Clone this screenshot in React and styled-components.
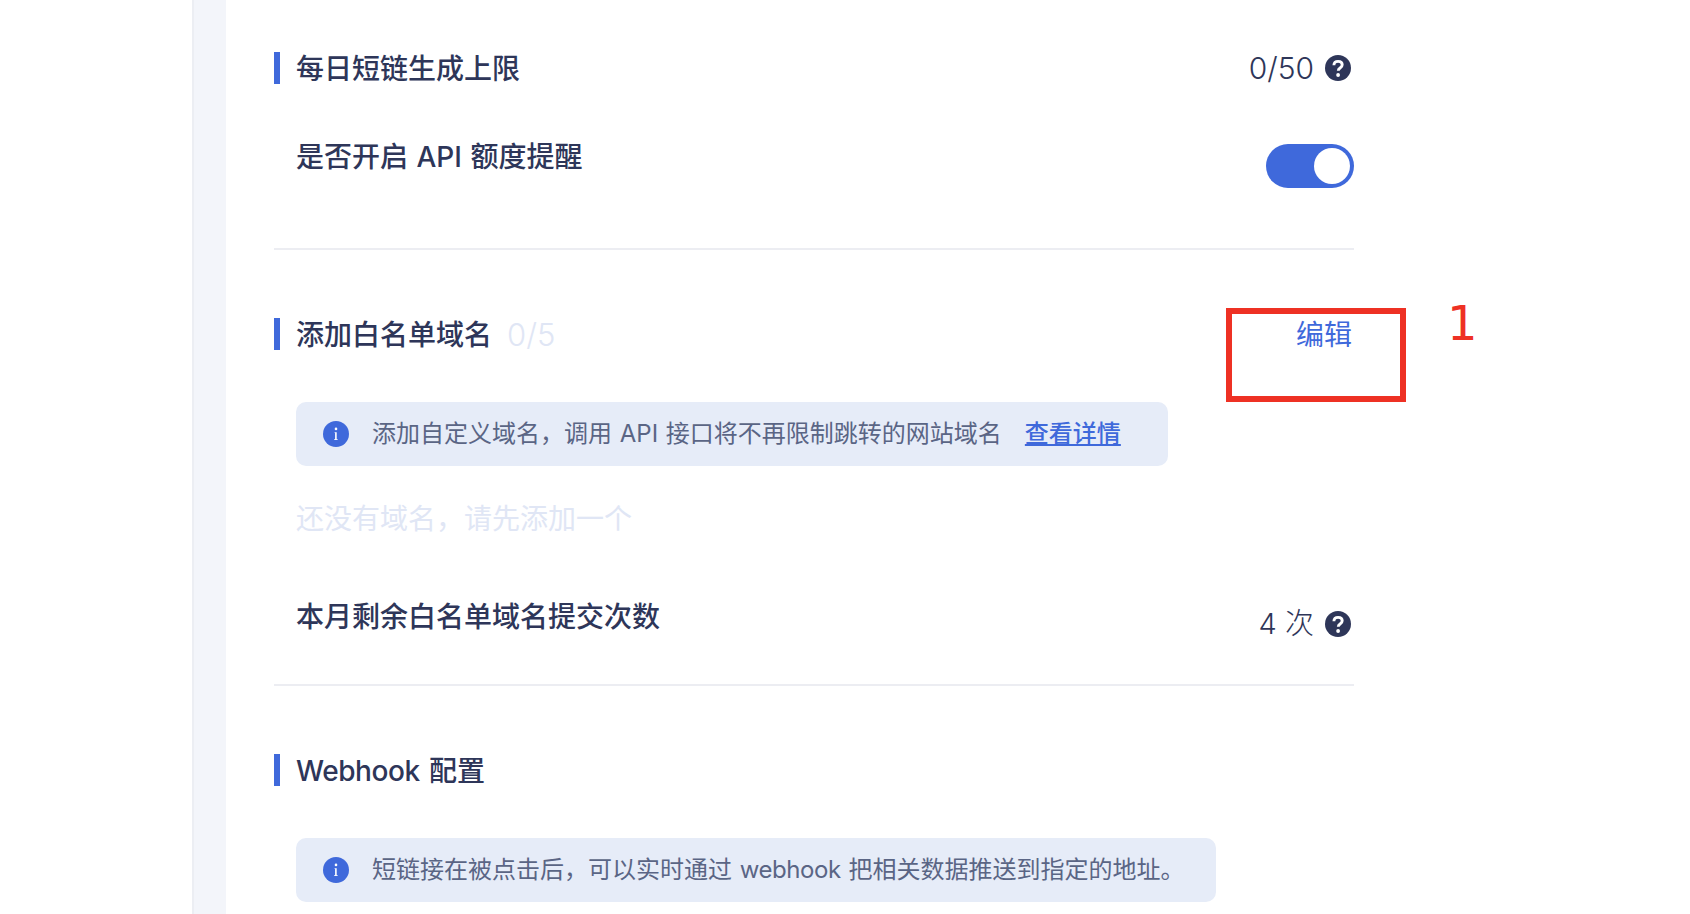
import React from "react";
import styled, { createGlobalStyle } from "styled-components";

const ink = "#2e3659";
const blue = "#3f69db";
const faint = "#e0e6f5";

const GlobalStyle = createGlobalStyle`
  html, body {
    margin: 0;
    height: 100%;
    background: #fff;
    overflow: hidden;
  }
  body {
    font-family: "Inter", "Noto Sans CJK SC", sans-serif;
    color: ${ink};
  }
`;

const InfoIcon = () => (
  <IconSvg viewBox="0 0 26 26" aria-hidden="true">
    <circle cx="13" cy="13" r="13" fill={blue} />
    <circle cx="13" cy="7.9" r="1.3" fill="#fff" />
    <path d="M11.6 11.2h2.1v7.1h1v.8h-3.6v-.8h1v-6.3h-.5z" fill="#fff" />
  </IconSvg>
);

const HelpIcon = () => (
  <IconSvg viewBox="0 0 26 26" aria-hidden="true">
    <circle cx="13" cy="13" r="13" fill={ink} />
    <path
      d="M8.9 10.2c.1-2.4 1.8-3.8 4.2-3.8s4.1 1.3 4.1 3.4c0 1.6-.9 2.4-2.1 3.2-1.2.8-1.8 1.3-1.8 2.8"
      fill="none"
      stroke="#fff"
      strokeWidth="2.9"
    />
    <circle cx="13.1" cy="20" r="1.9" fill="#fff" />
  </IconSvg>
);

const App = () => {
  return (
    <Page>
      <GlobalStyle />
      <SideStrip />
      <Content>
        <Section $first>
          <Heading>
            <Title>每日短链生成上限</Title>
            <Value>
              0/50
              <HelpIcon />
            </Value>
          </Heading>
          <ToggleRow>
            <Label>是否开启 API 额度提醒</Label>
            <Toggle>
              <Knob />
            </Toggle>
          </ToggleRow>
        </Section>

        <Section>
          <Heading>
            <Title>
              添加白名单域名
              <Count>0/5</Count>
            </Title>
            <EditLink>编辑</EditLink>
          </Heading>
          <Notice>
            <InfoIcon />
            <NoticeText>添加自定义域名，调用 API 接口将不再限制跳转的网站域名</NoticeText>
            <NoticeLink>查看详情</NoticeLink>
          </Notice>
          <EmptyText>还没有域名，请先添加一个</EmptyText>
          <QuotaRow>
            <Label>本月剩余白名单域名提交次数</Label>
            <QuotaValue>
              4 次
              <HelpIcon />
            </QuotaValue>
          </QuotaRow>
        </Section>

        <Section $last>
          <Heading>
            <Title>
              <Latin>Webhook</Latin>&nbsp;配置
            </Title>
          </Heading>
          <Notice $compact>
            <InfoIcon />
            <NoticeText>
              短链接在被点击后，可以实时通过 <Latin>webhook</Latin> 把相关数据推送到指定的地址。
            </NoticeText>
          </Notice>
        </Section>
      </Content>
      <Annotation>
        <MarkBox />
        <MarkNumber>1</MarkNumber>
      </Annotation>
    </Page>
  );
};

export default App;

const IconSvg = styled.svg`
  width: 26px;
  height: 26px;
  flex-shrink: 0;
`;

const Page = styled.div`
  position: relative;
  display: flex;
  width: 1690px;
  height: 914px;
  padding-left: 192px;
  box-sizing: border-box;
  overflow: hidden;
`;

const SideStrip = styled.div`
  width: 34px;
  box-sizing: border-box;
  background: #f3f5fa;
  border-left: 2px solid #eceef3;
`;

const Content = styled.main`
  width: 1080px;
  margin-left: 48px;
`;

const Section = styled.section`
  padding: ${p => (p.$first ? "52px" : "68px")} 0 ${p => (p.$first ? "60px" : "40px")};
  border-bottom: ${p => (p.$last ? "none" : "2px solid #ecedf2")};
`;

const Heading = styled.div`
  display: flex;
  align-items: center;
  justify-content: space-between;
  height: 32px;
  border-left: 6px solid ${blue};
  padding: 0 2px 0 16px;
`;

const Title = styled.h2`
  margin: 0;
  padding-top: 2px;
  font-size: 28px;
  line-height: 40px;
  font-weight: 500;
  word-spacing: 2px;
  display: flex;
  align-items: center;
  white-space: pre;
`;

const Latin = styled.span`
  letter-spacing: -0.45px;
`;

const Count = styled.span`
  margin-left: 15px;
  font-size: 31px;
  font-weight: 300;
  color: ${faint};
`;

const Value = styled.div`
  display: flex;
  align-items: center;
  gap: 11px;
  margin-right: 1px;
  font-size: 30px;
  font-weight: 300;
  line-height: 40px;
`;

const ToggleRow = styled.div`
  display: flex;
  justify-content: space-between;
  margin-top: 52px;
  padding-left: 22px;
`;

const Label = styled.div`
  padding-top: 1px;
  font-size: 28px;
  line-height: 40px;
  font-weight: 500;
  word-spacing: 1px;
`;

const Toggle = styled.div`
  display: flex;
  align-items: center;
  justify-content: flex-end;
  width: 88px;
  height: 44px;
  margin-top: 8px;
  padding: 4px;
  box-sizing: border-box;
  border-radius: 22px;
  background: ${blue};
`;

const Knob = styled.span`
  width: 36px;
  height: 36px;
  border-radius: 50%;
  background: #fff;
`;

const EditLink = styled.a`
  padding-top: 2px;
  font-size: 28px;
  line-height: 40px;
  color: ${blue};
`;

const Notice = styled.div`
  display: flex;
  align-items: center;
  width: fit-content;
  height: 64px;
  margin: 52px 0 0 22px;
  padding: 0 ${p => (p.$compact ? "32px" : "47px")} 0 27px;
  box-sizing: border-box;
  border-radius: 10px;
  background: #e6ecf8;
`;

const NoticeText = styled.span`
  margin-left: 23px;
  font-size: 24px;
  line-height: 34px;
  word-spacing: 1px;
  color: #5a6585;
`;

const NoticeLink = styled.a`
  margin-left: 23px;
  font-size: 24px;
  line-height: 34px;
  font-weight: 500;
  color: ${blue};
  text-decoration: underline;
`;

const EmptyText = styled.p`
  margin: 33px 0 -1px 22px;
  font-size: 28px;
  line-height: 40px;
  color: ${faint};
`;

const QuotaRow = styled.div`
  display: flex;
  justify-content: space-between;
  margin-top: 58px;
  padding-left: 22px;
`;

const QuotaValue = styled(Value)`
  margin: 8px 3px 0 0;
  font-size: 29px;
`;

const Annotation = styled.div`
  position: absolute;
  top: 305px;
  left: 1226px;
  display: flex;
`;

const MarkBox = styled.div`
  width: 180px;
  height: 94px;
  margin-top: 3px;
  box-sizing: border-box;
  border: 6px solid #ee3124;
`;

const MarkNumber = styled.span`
  margin: 1px 0 0 41px;
  font-family: "DejaVu Sans", sans-serif;
  font-size: 48px;
  line-height: 35px;
  color: #ee3124;
`;
